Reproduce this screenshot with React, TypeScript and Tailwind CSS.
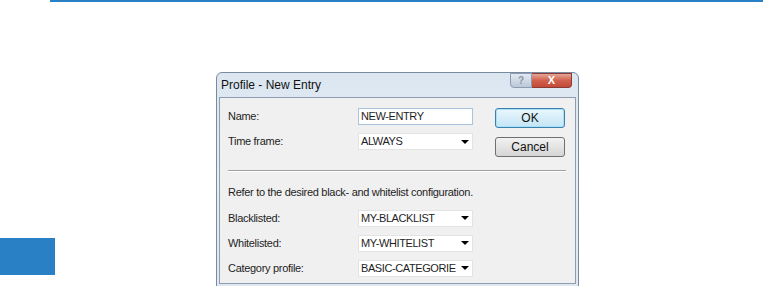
const topFields = [
  { label: 'Name:', value: 'NEW-ENTRY', select: false },
  { label: 'Time frame:', value: 'ALWAYS', select: true }
];

const listFields = [
  { label: 'Blacklisted:', value: 'MY-BLACKLIST' },
  { label: 'Whitelisted:', value: 'MY-WHITELIST' },
  { label: 'Category profile:', value: 'BASIC-CATEGORIE' }
];

function Field({ label, value, select }: { label: string; value: string; select: boolean }) {
  return (
    <div className="flex h-[17px] items-center">
      <span className="w-[130px] text-[11px] tracking-[-0.3px] text-[#1e1e1e]">{label}</span>
      <div
        className={
          select
            ? 'flex h-[17px] w-[115px] items-center justify-between border border-[#e3e3e3] bg-white pl-[2px] pr-[3px]'
            : 'flex h-[17px] w-[115px] items-center border border-[#a9c4dc] bg-white pl-[2px]'
        }
      >
        <span className="whitespace-nowrap text-[11px] tracking-[-0.4px] text-[#1e1e1e]">{value}</span>
        {select && <span className="ml-[2px] h-0 w-0 shrink-0 border-x-[4px] border-t-[4px] border-x-transparent border-t-black" />}
      </div>
    </div>
  );
}

function Dialog() {
  return (
    <div className="flex h-[215px] w-[363px] flex-col rounded-t-[6px] border border-[#7a8ba0] bg-gradient-to-b from-[#dbe6f1] via-[#e6edf5] to-[#dfe7f0] px-[2px] pb-[2px]">
      <div className="flex h-[24px] items-start justify-between">
        <span className="mt-[3px] pl-[2px] text-[12px] text-[#111]">Profile - New Entry</span>
        <div className="mr-[4px] flex">
          <div className="flex h-[15px] w-[22px] items-center justify-center rounded-bl-[4px] border border-[#8d9bb0] bg-gradient-to-b from-[#e3e9f1] to-[#bcc8d8] text-[10px] font-bold text-[#8a96a8]">?</div>
          <div className="flex h-[15px] w-[40px] items-center justify-center rounded-br-[4px] border border-l-0 border-[#8a3b33] bg-gradient-to-b from-[#e4a597] via-[#d0604c] to-[#c44a36] text-[11px] font-bold text-white">X</div>
        </div>
      </div>
      <div className="flex-1 border border-[#8e9cae] bg-[#f0f0f0] pl-[8px] pt-[10px]">
        <div className="flex">
          <div className="flex flex-col gap-[8px]">
            {topFields.map((f) => (
              <Field key={f.label} {...f} />
            ))}
          </div>
          <div className="ml-[22px] flex flex-col gap-[9px]">
            <button className="h-[20px] w-[70px] rounded-[3px] border border-[#3c7fb1] bg-gradient-to-b from-[#eaf6fd] to-[#c4e5f6] text-[12px] text-[#111] shadow-[inset_0_0_0_1px_#a6e1f6]">OK</button>
            <button className="h-[20px] w-[70px] rounded-[3px] border border-[#707070] bg-gradient-to-b from-[#f2f2f2] to-[#d5d5d5] text-[12px] text-[#111]">Cancel</button>
          </div>
        </div>
        <div className="mt-[13px] w-[338px] border-t border-b border-t-[#a0a0a0] border-b-white" />
        <p className="mt-[12px] text-[11px] tracking-[-0.3px] text-[#1e1e1e]">Refer to the desired black- and whitelist configuration.</p>
        <div className="mt-[9px] flex flex-col gap-[8px]">
          {listFields.map((f) => (
            <Field key={f.label} label={f.label} value={f.value} select />
          ))}
        </div>
      </div>
    </div>
  );
}

export default function App() {
  return (
    <div className="h-[286px] w-[763px] overflow-hidden bg-white font-['Liberation_Sans',Arial,sans-serif]">
      <div className="ml-[50px] h-[2px] bg-[#2a80c4]" />
      <div className="flex">
        <div className="mt-[236px] h-[37px] w-[55px] shrink-0 bg-[#2a80c4]" />
        <div className="ml-[161px] mt-[70px]">
          <Dialog />
        </div>
      </div>
    </div>
  );
}
